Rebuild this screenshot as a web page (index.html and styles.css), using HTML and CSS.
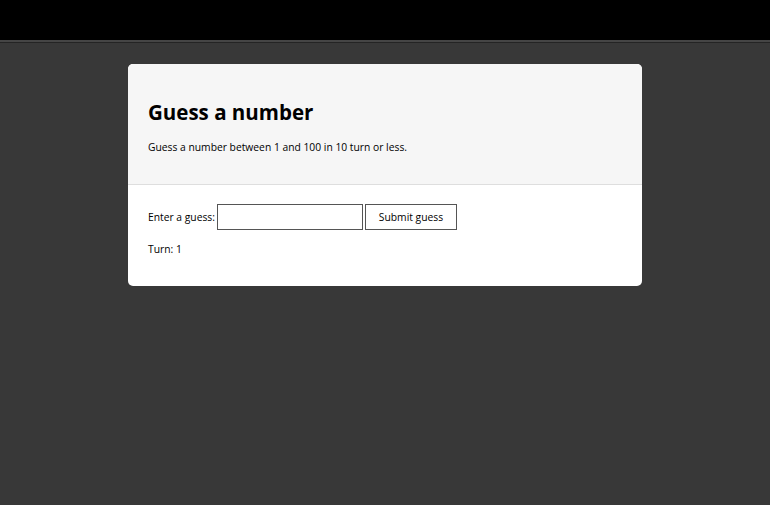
FILE: index.html
```html
<!DOCTYPE html>
<html>
<head>
<meta charset="utf-8">
<link rel="stylesheet" href="styles.css">
</head>
<body>
<div class="topbar"></div>
<main class="page">
  <section class="card">
    <header class="card-head">
      <h1>Guess a number</h1>
      <p>Guess a number between 1 and 100 in 10 turn or less.</p>
    </header>
    <div class="card-body">
      <form class="guess-form">
        <label for="guess">Enter a guess:</label>
        <input id="guess" type="text" class="guess-input">
        <button type="button" class="guess-btn">Submit guess</button>
      </form>
      <p class="turn">Turn: 1</p>
    </div>
  </section>
</main>
</body>
</html>
```
FILE: styles.css
```css
html, body {
  margin: 0;
  padding: 0;
  height: 100%;
}
body {
  background: #383838;
  font-family: "Open Sans", "Noto Sans", sans-serif;
  color: #000;
}
.topbar {
  height: 40px;
  background: #000;
  border-bottom: 2px solid #454545;
  box-shadow: 0 1px 0 #242424;
}
.page {
  display: flex;
  justify-content: center;
  padding-top: 22px;
}
.card {
  width: 514px;
  background: #fff;
  border-radius: 5px;
  overflow: hidden;
}
.card-head {
  box-sizing: border-box;
  height: 121px;
  background: #f6f6f6;
  border-bottom: 1px solid #dedede;
  padding: 34px 20px 0;
}
.card-head h1 {
  margin: 0;
  font-size: 20.5px;
  font-weight: 700;
  line-height: 28px;
}
.card-head p {
  margin: 13px 0 0;
  font-size: 10.3px;
  line-height: 16px;
}
.card-body {
  padding: 19px 20px 29px;
}
.guess-form {
  display: flex;
  align-items: center;
  gap: 2px;
  font-size: 10.3px;
}
.guess-input {
  box-sizing: border-box;
  width: 146px;
  height: 26px;
  border: 1px solid #555;
  border-radius: 0;
  padding: 1px 2px;
  margin: 0;
  font: inherit;
}
.guess-btn {
  box-sizing: border-box;
  width: 92px;
  height: 26px;
  border: 1px solid #555;
  border-radius: 0;
  background: #fff;
  font: inherit;
  color: #000;
  margin: 0;
  padding: 0;
}
.turn {
  margin: 11px 0 0;
  font-size: 10.3px;
  line-height: 16px;
}
```
